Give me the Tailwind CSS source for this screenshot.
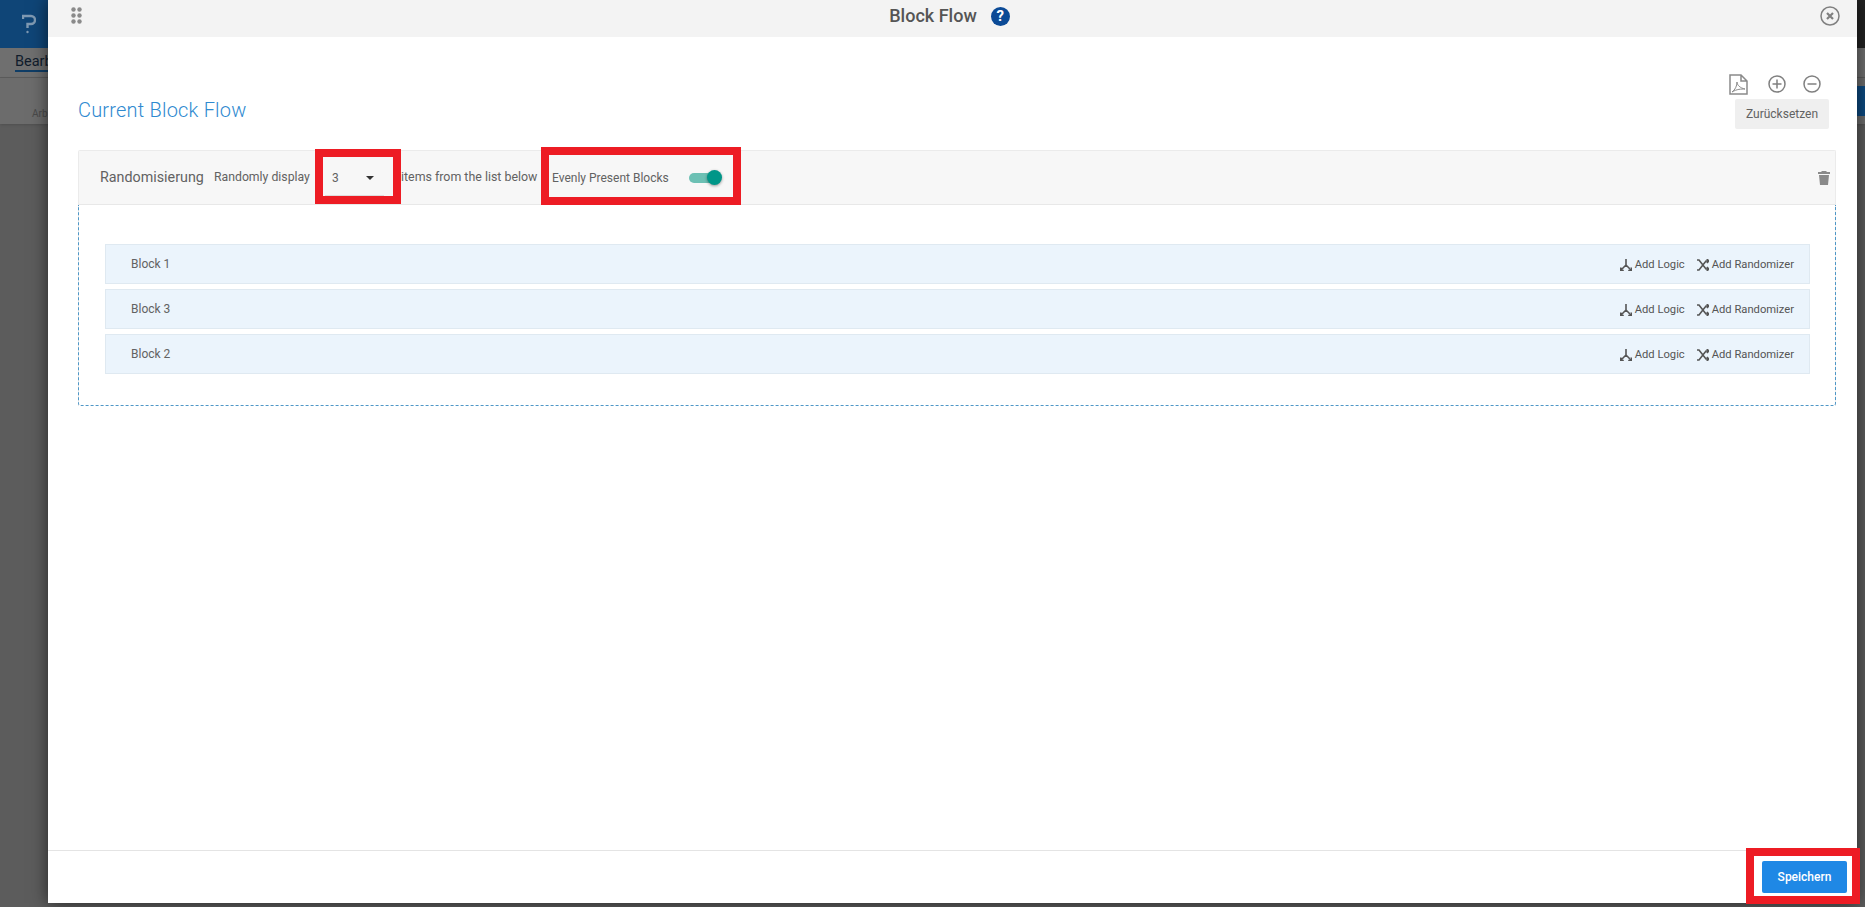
<!DOCTYPE html>
<html lang="de">
<head>
    <meta charset="UTF-8">
    <title>Block Flow</title>
    <script src="https://cdn.jsdelivr.net/npm/@tailwindcss/browser@4"></script>
</head>
<body class="relative w-[1865px] h-[907px] overflow-hidden bg-[#5c5c5c] font-['Roboto',sans-serif] text-[#626262]">

    <!-- page behind the modal, dimmed -->
    <div class="h-[48px] bg-[#0f4577] flex items-start pl-[22px] pt-[14px]">
        <svg width="14" height="20" viewBox="0 0 14 20" fill="none" stroke="#7f99b2" stroke-width="2.4">
            <path d="M1 5V2h8a4 4 0 0 1 0 8H5.500v4"/><circle cx="5.500" cy="18" r="1.200" fill="#7f99b2" stroke="none"/>
        </svg>
        <div class="ml-auto w-[70px] h-[48px] mt-[-14px] bg-[#222222]"></div>
    </div>
    <div class="h-[30px] bg-[#6f6f6f] border-b border-[#5c5c5c] pl-[15px] pt-[3px] text-[14.500px] text-[#101c2c]"><span class="border-b-2 border-[#0f3d66]">Bearb</span></div>
    <div class="h-[46px] bg-[#6c6c6c] shadow pl-[32px] pt-[28px] text-[10px] text-[#4a4a4a]">Arb</div>
    <div class="absolute left-[1857px] top-[86px] w-[8px] h-[30px] bg-[#0d4a80]"></div>

    <!-- modal -->
    <div class="absolute left-[48px] top-0 w-[1809px] h-[903px] bg-white flex flex-col shadow-[0_0_16px_rgba(0,0,0,0.6)]">
        <div class="h-[37px] shrink-0 bg-[#f3f3f3] relative flex items-center justify-center pb-[7px]">
            <svg class="absolute left-[23px] top-[7px]" width="11" height="17" viewBox="0 0 11 17" fill="#8a8a8a">
                <circle cx="2.500" cy="2.500" r="2.200"/><circle cx="8.500" cy="2.500" r="2.200"/>
                <circle cx="2.500" cy="8.500" r="2.200"/><circle cx="8.500" cy="8.500" r="2.200"/>
                <circle cx="2.500" cy="14.500" r="2.200"/><circle cx="8.500" cy="14.500" r="2.200"/>
            </svg>
            <span class="text-[18px] font-medium text-[#555555] ml-[-6px]">Block Flow</span>
            <span class="ml-[14px] mt-[2px] w-[19px] h-[19px] rounded-full bg-[#0b4a96] text-white text-[15px] font-bold leading-[19px] text-center">?</span>
            <svg class="absolute right-[17px] top-[6px]" width="20" height="20" viewBox="0 0 20 20" fill="none" stroke="#808080">
                <circle cx="10" cy="10" r="9" stroke-width="1.500"/>
                <path d="M7 7l6 6M13 7l-6 6" stroke-width="2.200"/>
            </svg>
        </div>

        <div class="flex-1 px-[30px] pr-[21px] relative">
            <div class="flex items-start justify-between h-[113px]">
                <h2 class="mt-[60px] text-[20px] font-light tracking-[0.2px] leading-[26px] text-[#2f8ad0]">Current Block Flow</h2>
                <div class="flex flex-col items-end mr-[7px] mt-[35px]">
                    <div class="flex items-center mr-[8px] h-[24px]">
                        <svg width="19" height="21" viewBox="0 0 19 21" fill="none" stroke="#8a8a8a" stroke-width="1.500">
                            <path d="M1 1h11l6 6v13H1zM12 1v6h6"/>
                            <path d="M3 18c3-2 5-6 5-10 0 3 3 6 8 7-4 0-8 0-13 3z" stroke-width="1"/>
                        </svg>
                        <svg class="ml-[20px]" width="18" height="18" viewBox="0 0 18 18" fill="none" stroke="#808080" stroke-width="1.500">
                            <circle cx="9" cy="9" r="8"/><path d="M9 4.500v9M4.500 9h9"/>
                        </svg>
                        <svg class="ml-[17px]" width="18" height="18" viewBox="0 0 18 18" fill="none" stroke="#808080" stroke-width="1.500">
                            <circle cx="9" cy="9" r="8"/><path d="M4.500 9h9"/>
                        </svg>
                    </div>
                    <button class="mt-[3px] w-[94px] h-[30px] bg-[#efefef] rounded-[2px] text-[12px] text-[#626262]">Zurücksetzen</button>
                </div>
            </div>

            <div class="border border-[#ebebeb] border-b-0 rounded-t-[2px]">
                <div class="h-[54px] bg-[#f7f7f7] border-b border-[#e8e8e8] flex items-center pl-[21px] pr-[4px] relative whitespace-nowrap">
                    <span class="text-[14.300px] w-[105px]">Randomisierung</span>
                    <span class="ml-[9px] text-[12.250px] w-[96px]">Randomly display</span>
                    <div class="ml-[15px] w-[59px] h-[36px] mt-[1px] border-b border-[#dddddd] flex items-center justify-between pl-[7px] pr-[10px] text-[12px]">
                        <span>3</span><span class="w-0 h-0 border-x-[4px] border-x-transparent border-t-[4px] border-t-[#333333]"></span>
                    </div>
                    <span class="ml-[17px] text-[12.400px] w-[136px]">items from the list below</span>
                    <span class="ml-[15px] text-[12px] w-[116px]">Evenly Present Blocks</span>
                    <div class="relative ml-[21px] w-[33px] h-[16px]">
                        <div class="absolute left-0 top-[3px] w-[30px] h-[10px] rounded-full bg-[#6cc0b4]"></div>
                        <div class="absolute right-0 top-[0px] w-[15px] h-[15px] rounded-full bg-[#009688] shadow-[0_1px_3px_rgba(0,0,0,0.4)]"></div>
                    </div>
                    <svg class="ml-auto mr-[1px]" width="12" height="14" viewBox="0 0 12 14" fill="#8a8a8a">
                        <path d="M4 0h4l1 1h3v2H0V1h3zM1 4h10l-1 10H2z"/>
                    </svg>
                </div>
                <div class="border border-dashed border-[#4f97c7] border-t-0 rounded-b-[3px] ml-[-1px] mr-[-1px] h-[201px] pl-[26px] pr-[25px] pt-[39px] flex flex-col gap-[5px]">
                    <div class="h-[40px] shrink-0 bg-[#ebf4fc] border border-[#dfe9f1] flex items-center pl-[25px] pr-[15px] text-[12px]">
                        <span>Block 1</span>
                        <span class="ml-auto mt-[2px] flex items-center gap-[3px] text-[11.200px] text-[#555555]">
                            <svg width="12" height="12" viewBox="0 0 12 12" fill="none" stroke="#555555" stroke-width="1.600"><path d="M6 0v6L1.500 10.500M6 6l4.500 4.500M.8 8.500v3h3M11.200 8.500v3h-3"/></svg>Add Logic
                        </span>
                        <span class="ml-[12px] mt-[2px] flex items-center gap-[3px] text-[11.200px] text-[#555555]">
                            <svg width="12" height="12" viewBox="0 0 12 12" fill="none" stroke="#555555" stroke-width="1.600"><path d="M0 1h2l7 9h3M0 11h2l7-9h3M9.800 0l2 2-2 2M9.800 8l2 2-2 2"/></svg>Add Randomizer
                        </span>
                    </div>
                    <div class="h-[40px] shrink-0 bg-[#ebf4fc] border border-[#dfe9f1] flex items-center pl-[25px] pr-[15px] text-[12px]">
                        <span>Block 3</span>
                        <span class="ml-auto mt-[2px] flex items-center gap-[3px] text-[11.200px] text-[#555555]">
                            <svg width="12" height="12" viewBox="0 0 12 12" fill="none" stroke="#555555" stroke-width="1.600"><path d="M6 0v6L1.500 10.500M6 6l4.500 4.500M.8 8.500v3h3M11.200 8.500v3h-3"/></svg>Add Logic
                        </span>
                        <span class="ml-[12px] mt-[2px] flex items-center gap-[3px] text-[11.200px] text-[#555555]">
                            <svg width="12" height="12" viewBox="0 0 12 12" fill="none" stroke="#555555" stroke-width="1.600"><path d="M0 1h2l7 9h3M0 11h2l7-9h3M9.800 0l2 2-2 2M9.800 8l2 2-2 2"/></svg>Add Randomizer
                        </span>
                    </div>
                    <div class="h-[40px] shrink-0 bg-[#ebf4fc] border border-[#dfe9f1] flex items-center pl-[25px] pr-[15px] text-[12px]">
                        <span>Block 2</span>
                        <span class="ml-auto mt-[2px] flex items-center gap-[3px] text-[11.200px] text-[#555555]">
                            <svg width="12" height="12" viewBox="0 0 12 12" fill="none" stroke="#555555" stroke-width="1.600"><path d="M6 0v6L1.500 10.500M6 6l4.500 4.500M.8 8.500v3h3M11.200 8.500v3h-3"/></svg>Add Logic
                        </span>
                        <span class="ml-[12px] mt-[2px] flex items-center gap-[3px] text-[11.200px] text-[#555555]">
                            <svg width="12" height="12" viewBox="0 0 12 12" fill="none" stroke="#555555" stroke-width="1.600"><path d="M0 1h2l7 9h3M0 11h2l7-9h3M9.800 0l2 2-2 2M9.800 8l2 2-2 2"/></svg>Add Randomizer
                        </span>
                    </div>
                </div>
            </div>
        </div>

        <div class="h-[53px] shrink-0 border-t border-[#e4e4e4] flex items-start justify-end pr-[10px] pt-[10px]">
            <button class="w-[85px] h-[32px] bg-[#1f88e5] rounded-[2px] text-white text-[12px] font-medium">Speichern</button>
        </div>
    </div>

    <!-- red annotation boxes -->
    <div class="absolute left-[315px] top-[149px] w-[86px] h-[55px] border-[8px] border-[#ed1c24]"></div>
    <div class="absolute left-[541px] top-[147px] w-[200px] h-[58px] border-[8px] border-[#ed1c24]"></div>
    <div class="absolute left-[1746px] top-[848px] w-[114px] h-[56px] border-[8px] border-[#ed1c24]"></div>
</body>
</html>
